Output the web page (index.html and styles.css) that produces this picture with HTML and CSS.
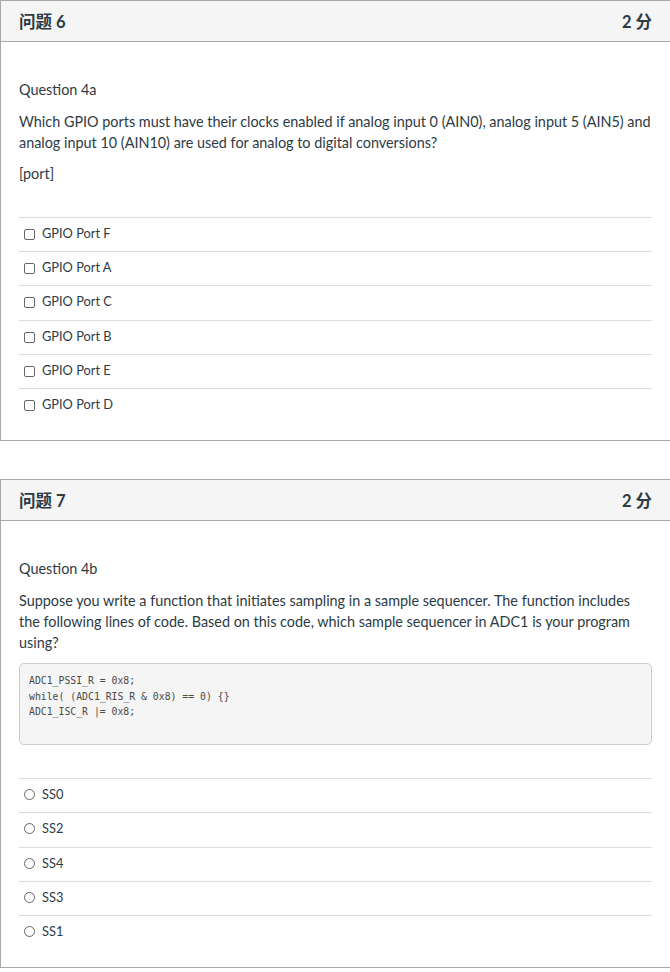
FILE: index.html
```html
<!DOCTYPE html>
<html lang="zh">
<head>
<meta charset="utf-8">
<title>Quiz</title>
<link rel="stylesheet" href="styles.css">
</head>
<body>
<div class="page">
  <section class="card">
    <header class="card-head">
      <span class="q-title">问题 6</span>
      <span class="q-points">2 分</span>
    </header>
    <div class="card-body">
      <p class="text">Question 4a</p>
      <p class="text">Which GPIO ports must have their clocks enabled if analog input 0 (AIN0), analog input 5 (AIN5) and analog input 10 (AIN10) are used for analog to digital conversions?</p>
      <p class="text">[port]</p>
      <ul class="answers">
        <li class="answer"><span class="box"></span><span class="label">GPIO Port F</span></li>
        <li class="answer"><span class="box"></span><span class="label">GPIO Port A</span></li>
        <li class="answer"><span class="box"></span><span class="label">GPIO Port C</span></li>
        <li class="answer"><span class="box"></span><span class="label">GPIO Port B</span></li>
        <li class="answer"><span class="box"></span><span class="label">GPIO Port E</span></li>
        <li class="answer"><span class="box"></span><span class="label">GPIO Port D</span></li>
      </ul>
    </div>
  </section>

  <section class="card">
    <header class="card-head">
      <span class="q-title">问题 7</span>
      <span class="q-points">2 分</span>
    </header>
    <div class="card-body">
      <p class="text">Question 4b</p>
      <p class="text">Suppose you write a function that initiates sampling in a sample sequencer. The function includes the following lines of code. Based on this code, which sample sequencer in ADC1 is your program using?</p>
      <pre class="code">ADC1_PSSI_R = 0x8;
while( (ADC1_RIS_R &amp; 0x8) == 0) {}
ADC1_ISC_R |= 0x8;
&nbsp;</pre>
      <ul class="answers">
        <li class="answer"><span class="radio"></span><span class="label">SS0</span></li>
        <li class="answer"><span class="radio"></span><span class="label">SS2</span></li>
        <li class="answer"><span class="radio"></span><span class="label">SS4</span></li>
        <li class="answer"><span class="radio"></span><span class="label">SS3</span></li>
        <li class="answer"><span class="radio"></span><span class="label">SS1</span></li>
      </ul>
    </div>
  </section>
</div>
</body>
</html>
```

FILE: styles.css
```css
html, body {
  margin: 0;
  padding: 0;
  overflow: hidden;
  background: #ffffff;
}

body {
  font-family: Lato, "Noto Sans CJK SC", sans-serif;
  color: #2d3b45;
}

.page {
  width: 671px;
  display: flex;
  flex-direction: column;
  gap: 38px;
}

.card {
  box-sizing: border-box;
  width: 671px;
  border: 1px solid #a8a8a8;
  background: #fff;
}

.card-head {
  box-sizing: border-box;
  height: 41px;
  background: #f5f5f5;
  border-bottom: 1px solid #a8a8a8;
  display: flex;
  align-items: center;
  justify-content: space-between;
  padding: 0 18px 0 18px;
  font-size: 16.5px;
  font-weight: 700;
}

.card-body {
  padding: 37px 18px 18px 18px;
}

.text {
  margin: 0 0 10.5px 0;
  font-size: 14.4px;
  line-height: 21px;
}

.code {
  margin: 0 0 10.5px 0;
  box-sizing: border-box;
  height: 82px;
  padding: 9px 9px;
  background: #f5f5f5;
  border: 1px solid #c7cdd1;
  border-radius: 5px;
  font-family: "DejaVu Sans Mono", monospace;
  font-size: 9.8px;
  line-height: 15.5px;
  color: #4a4a4a;
}

.answers {
  list-style: none;
  margin: 33px 0 0 0;
  padding: 0;
}

.answer {
  display: flex;
  align-items: center;
  gap: 7px;
  border-top: 1px solid #dcdcdc;
  padding: 6px 0 9.2px 5px;
  font-size: 12.8px;
  line-height: 18px;
}

.box {
  box-sizing: border-box;
  width: 11px;
  height: 11px;
  border: 1px solid #666;
  border-radius: 2px;
  margin-top: 3px;
  flex: none;
}

.radio {
  box-sizing: border-box;
  width: 11px;
  height: 11px;
  border: 1px solid #666;
  border-radius: 50%;
  margin-top: 1px;
  flex: none;
}
```
